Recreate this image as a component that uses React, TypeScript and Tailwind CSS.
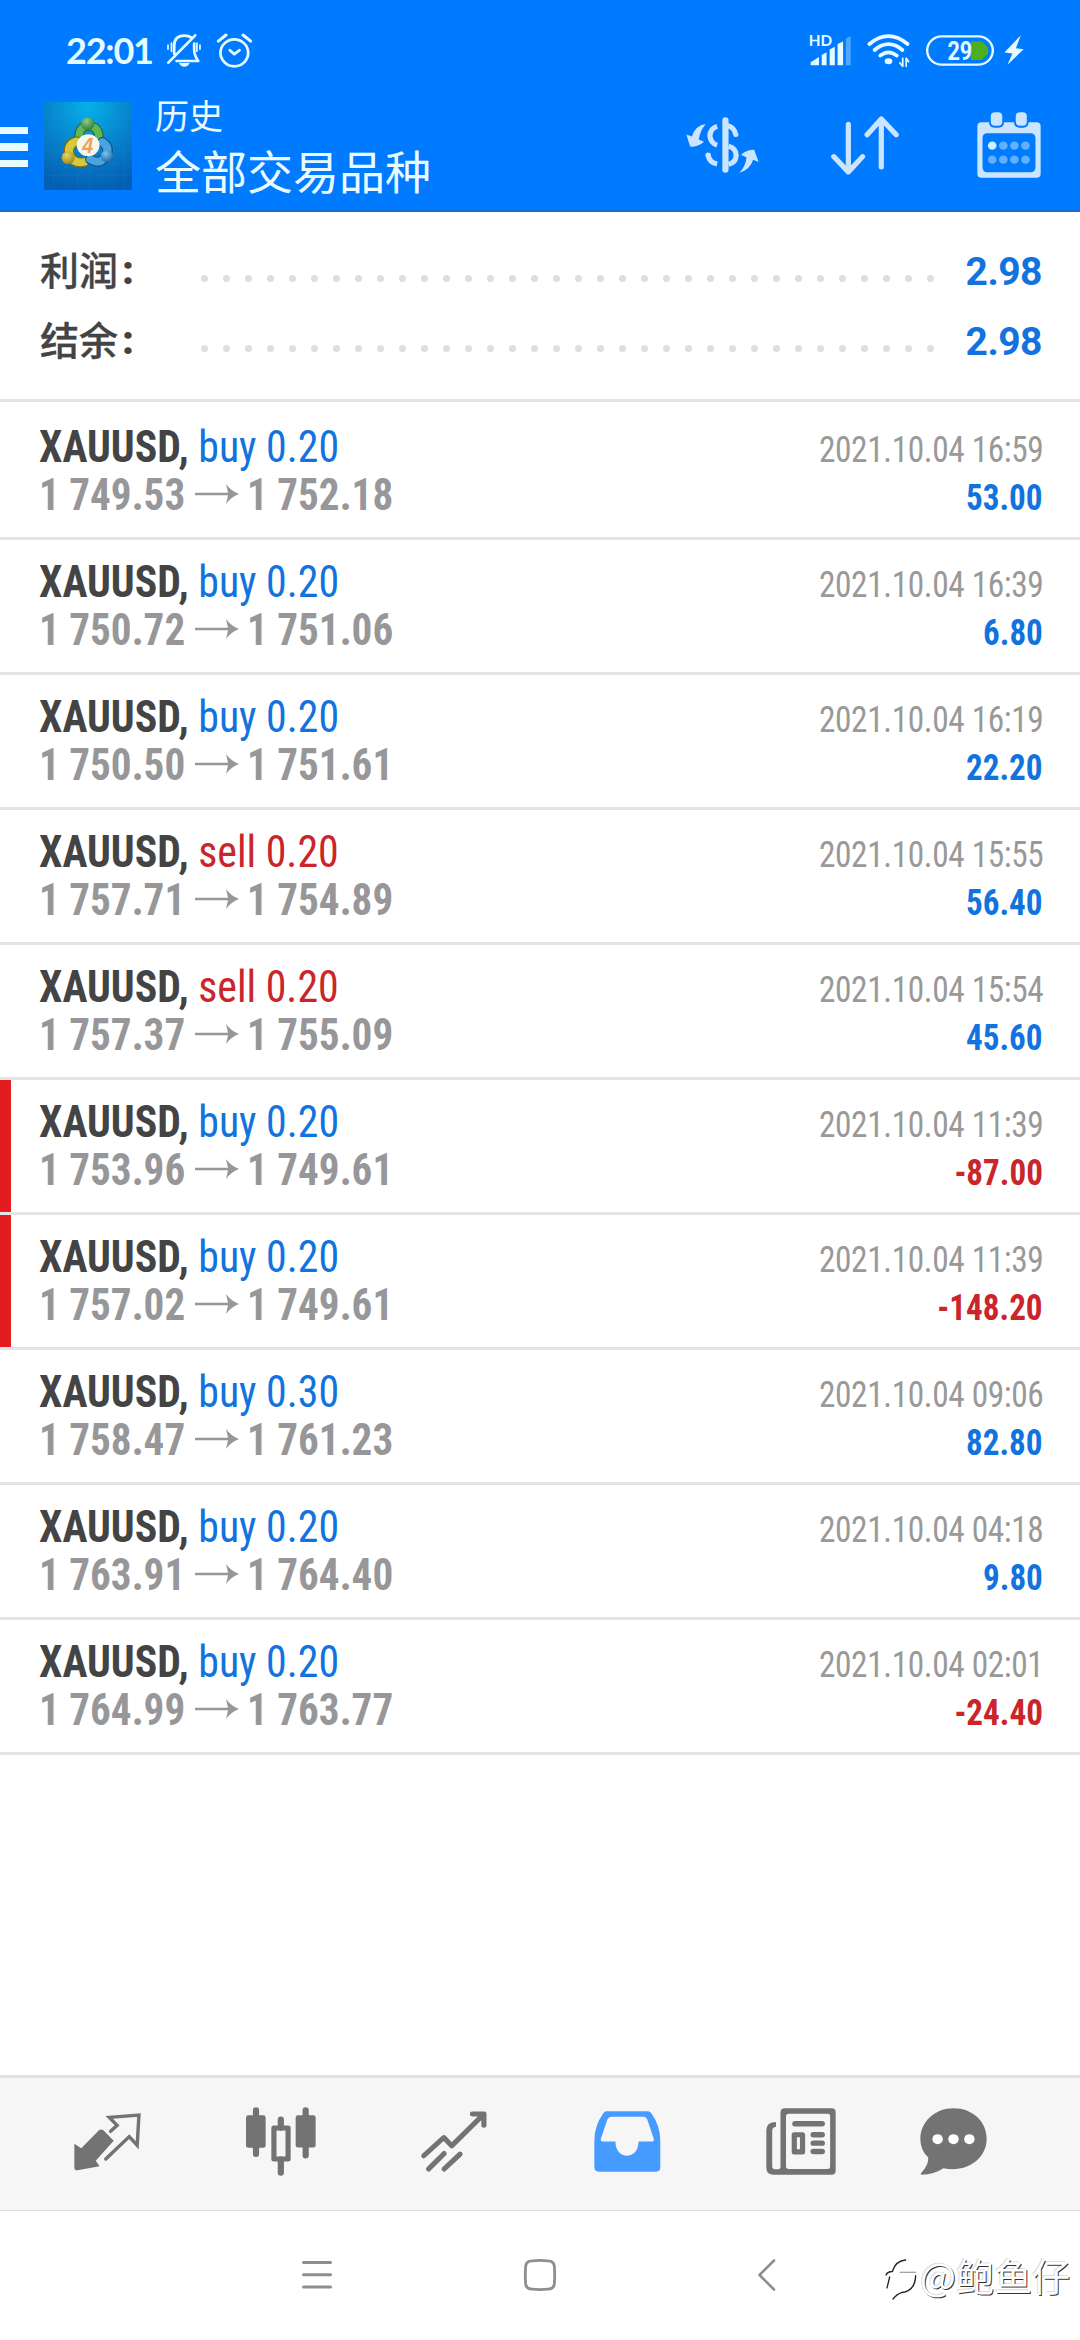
import type { ReactNode } from 'react';

type Deal = {
  side: 'buy' | 'sell';
  volume: string;
  open: string;
  close: string;
  time: string;
  profit: string;
  marked?: boolean;
};

const deals: Deal[] = [
  { side: 'buy', volume: '0.20', open: '1 749.53', close: '1 752.18', time: '2021.10.04 16:59', profit: '53.00' },
  { side: 'buy', volume: '0.20', open: '1 750.72', close: '1 751.06', time: '2021.10.04 16:39', profit: '6.80' },
  { side: 'buy', volume: '0.20', open: '1 750.50', close: '1 751.61', time: '2021.10.04 16:19', profit: '22.20' },
  { side: 'sell', volume: '0.20', open: '1 757.71', close: '1 754.89', time: '2021.10.04 15:55', profit: '56.40' },
  { side: 'sell', volume: '0.20', open: '1 757.37', close: '1 755.09', time: '2021.10.04 15:54', profit: '45.60' },
  { side: 'buy', volume: '0.20', open: '1 753.96', close: '1 749.61', time: '2021.10.04 11:39', profit: '-87.00', marked: true },
  { side: 'buy', volume: '0.20', open: '1 757.02', close: '1 749.61', time: '2021.10.04 11:39', profit: '-148.20', marked: true },
  { side: 'buy', volume: '0.30', open: '1 758.47', close: '1 761.23', time: '2021.10.04 09:06', profit: '82.80' },
  { side: 'buy', volume: '0.20', open: '1 763.91', close: '1 764.40', time: '2021.10.04 04:18', profit: '9.80' },
  { side: 'buy', volume: '0.20', open: '1 764.99', close: '1 763.77', time: '2021.10.04 02:01', profit: '-24.40' },
];

function Icon({ box, className, children }: { box: string; className: string; children: ReactNode }) {
  return (
    <svg viewBox={box} preserveAspectRatio="none" className={`block shrink-0 overflow-visible ${className}`} fill="none" strokeLinecap="round" strokeLinejoin="round">
      {children}
    </svg>
  );
}

function StatusBar() {
  return (
    <div className="flex h-[100px] items-center pl-[66px] text-[#e6fbff]">
      <span className="w-[101px] font-[Lato] text-[36px] leading-[40px] font-bold tracking-[-1.2px]">22:01</span>
      <Icon box="484 98 100 102" className="h-[34px] w-[34px]">
        <g stroke="currentColor" strokeWidth="8">
          <path d="M505 160V137Q505 106 535 106Q548 106 556 112M564 130V150Q564 165 576 182H512M488 187L567 105" />
          <path strokeWidth="5" d="M487 134V147M497 128V153M572 128V153M581 134V147" />
        </g>
        <path fill="currentColor" d="M519 188H551Q546 199 535 199Q524 199 519 188Z" />
      </Icon>
      <Icon box="632 98 101 104" className="ml-[16px] h-[35px] w-[35px]">
        <g stroke="currentColor" strokeWidth="8">
          <circle cx="682" cy="157" r="40" />
          <path d="M636 122L658 104M707 104L729 122" strokeWidth="9" />
          <path d="M669 149L682 161L697 149" />
        </g>
      </Icon>
      <Icon box="782 96 122 98" className="ml-[557px] h-[33px] w-[42px]">
        <text x="781" y="132" fontFamily="Lato" fontWeight="700" fontSize="45" fill="currentColor" textLength="68" lengthAdjust="spacingAndGlyphs">HD</text>
        <path fill="currentColor" d="M787 189V180L811 164V189ZM819 189V158L833 150V189ZM842 189V142L857 134V189ZM865 189V126L881 118V189Z" />
        <path fill="currentColor" opacity=".35" d="M889 189V110L903 102V189Z" />
      </Icon>
      <Icon box="949 98 124 105" className="ml-[16px] h-[35px] w-[43px]">
        <g stroke="currentColor" strokeWidth="11">
          <path d="M956 131Q1011 84 1066 131M971 149Q1011 114 1051 149M987 166Q1011 146 1035 166" />
        </g>
        <ellipse cx="1011" cy="183" rx="11" ry="9" fill="currentColor" />
        <path stroke="currentColor" strokeWidth="5" d="M1052 174V198M1052 198L1044 188M1062 198V174M1062 174L1069 184" />
      </Icon>
      <Icon box="1118 101 197 92" className="ml-[16px] h-[31px] w-[68px]">
        <rect x="1121.500" y="105" width="190" height="84" rx="42" stroke="currentColor" strokeWidth="7" />
        <path fill="#4caf1e" d="M1248 120H1280L1298 138V157L1280 175H1248Z" />
        <text x="1180" y="174" fontFamily="Roboto" fontWeight="700" fontSize="74" fill="currentColor" textLength="72" lengthAdjust="spacingAndGlyphs">29</text>
      </Icon>
      <Icon box="1344 102 57 88" className="ml-[10px] h-[30px] w-[20px]">
        <path fill="currentColor" d="M1392 103L1345 153L1368 156L1354 189L1400 144L1378 141Z" />
      </Icon>
    </div>
  );
}

function Logo() {
  return (
    <Icon box="128 306 255 264" className="h-[88px] w-[88px]">
      <defs>
        <radialGradient id="sky" cx=".5" cy=".05" r=".95">
          <stop offset="0" stopColor="#06b0ea" />
          <stop offset=".5" stopColor="#0784cc" />
          <stop offset="1" stopColor="#045fb4" />
        </radialGradient>
        <radialGradient id="green" cx=".4" cy=".3" r=".8">
          <stop offset="0" stopColor="#8fce83" />
          <stop offset="1" stopColor="#1f7638" />
        </radialGradient>
        <radialGradient id="gold" cx=".4" cy=".3" r=".8">
          <stop offset="0" stopColor="#e8d75a" />
          <stop offset="1" stopColor="#94801a" />
        </radialGradient>
        <radialGradient id="blue" cx=".4" cy=".3" r=".8">
          <stop offset="0" stopColor="#7cc4ee" />
          <stop offset="1" stopColor="#155f9f" />
        </radialGradient>
      </defs>
      <rect x="128" y="306" width="255" height="264" fill="url(#sky)" />
      <path stroke="#3fb4e4" strokeOpacity=".14" strokeWidth="2" d="M155 306V570M190 306V570M225 306V570M260 306V570M295 306V570M330 306V570M362 306V570M128 345H383M128 382H383M128 418H383M128 454H383M128 490H383M128 526H383" />
      <path stroke="#2c6b2e" strokeWidth="28" d="M230 412Q228 378 257 378Q286 378 287 412" />
      <path stroke="#62b656" strokeWidth="21" d="M230 412Q228 378 257 378Q286 378 287 412" />
      <path stroke="#7d6c12" strokeWidth="30" d="M222 424Q194 434 202 464Q214 492 244 486" />
      <path stroke="#d8c93c" strokeWidth="23" d="M222 424Q194 434 202 464Q214 492 244 486" />
      <path stroke="#0e4f8c" strokeWidth="30" d="M297 426Q320 442 308 468Q290 496 262 478" />
      <path stroke="#4ba3dd" strokeWidth="23" d="M297 426Q320 442 308 468Q290 496 262 478" />
      <circle cx="255" cy="371" r="19" fill="url(#green)" />
      <circle cx="198" cy="473" r="19" fill="url(#gold)" />
      <circle cx="310" cy="468" r="18" fill="url(#blue)" />
      <circle cx="256" cy="436" r="33" fill="#f6f6f1" />
      <text x="239" y="458" fontFamily="Liberation Sans" fontStyle="italic" fontWeight="700" fontSize="64" fill="#f3a055" textLength="32" lengthAdjust="spacingAndGlyphs">4</text>
    </Icon>
  );
}

function Header() {
  return (
    <header className="h-[212px] border-b-2 border-[#1a6bd2] bg-[#007aff]">
      <StatusBar />
      <div className="flex h-[90px] items-center">
        <div className="mt-1 flex w-[28px] flex-col gap-[9px]">
          <div className="h-[7.5px] bg-[#e9faff]" />
          <div className="h-[7.5px] bg-[#e9faff]" />
          <div className="h-[7.5px] bg-[#e9faff]" />
        </div>
        <div className="mt-[2px] ml-4"><Logo /></div>
        <div className="-mt-[3px] ml-[23px] w-[531px] font-['Noto_Sans_CJK_SC',sans-serif] text-[#e9fbff]">
          <div className="text-[34px] leading-[50px]">历史</div>
          <div className="text-[46px] leading-[58px]">全部交易品种</div>
        </div>
        <Icon box="423 348 211 169" className="h-[56px] w-[73px] text-[#cbe5ff]">
          <rect x="528" y="349" width="18" height="167" rx="9" fill="currentColor" />
          <g stroke="currentColor" strokeWidth="15" strokeLinecap="butt">
            <path d="M513 376Q493 382 492 405Q494 427 513 433" />
            <path d="M546 375Q562 380 567 401" strokeLinecap="round" />
            <path d="M546 436Q568 443 568 464Q567 486 546 491" />
            <path d="M487 463Q490 485 513 490" />
          </g>
          <circle cx="487" cy="463" r="8" fill="currentColor" />
          <path fill="currentColor" d="M480 369Q450 373 440 407L424 401L435 437Q457 440 475 423L460 416Q463 390 480 369Z" />
          <path fill="currentColor" d="M577 516Q608 508 617 477L633 484L620 447Q600 446 582 462L598 470Q595 498 577 516Z" />
        </Icon>
        <Icon box="846 348 196 176" className="ml-[72px] h-[59px] w-[68px]">
          <path stroke="#cbe5ff" strokeWidth="15" d="M896 373V515M854 469L896 515L937 469M991 500V357M950 404L991 357L1034 404" />
        </Icon>
        <Icon box="1268 335 185 198" className="ml-[78px] h-[66px] w-[64px]">
          <path fill="#cbe5ff" fillRule="evenodd" d="M1281 366H1440Q1452 366 1452 378V520Q1452 532 1440 532H1281Q1269 532 1269 520V378Q1269 366 1281 366ZM1298 399Q1284 399 1284 413V501Q1284 516 1298 516H1422Q1437 516 1437 501V413Q1437 399 1422 399Z" />
          <rect x="1303" y="331" width="43" height="51" rx="15" fill="#007aff" />
          <rect x="1375" y="331" width="42" height="51" rx="15" fill="#007aff" />
          <rect x="1308" y="336" width="33" height="40" rx="12" fill="#cbe5ff" />
          <rect x="1380" y="336" width="32" height="40" rx="12" fill="#cbe5ff" />
          {[1312, 1344, 1376, 1408].map((x) => (
            <g key={x} fill="#62b1ff">
              <circle cx={x} cy="436" r="12.500" fill={x === 1312 ? '#c9f0ff' : '#62b1ff'} />
              <circle cx={x} cy="478" r="12.500" />
            </g>
          ))}
        </Icon>
      </div>
    </header>
  );
}

function SummaryRow({ label, value }: { label: string; value: string }) {
  return (
    <div className="flex h-[70px] items-center justify-between">
      <div className="flex w-[160px] items-center text-[#444]">
        <span className="-mt-[5px] font-['Noto_Sans_CJK_SC',sans-serif] text-[39px] font-medium [-webkit-text-stroke:0.3px]">{label}</span>
        <span className="ml-1 font-[Roboto] text-[40px] font-black">:</span>
      </div>
      <div className="mt-[15px] flex gap-[15px]">
        {Array.from({ length: 34 }, (_, i) => (
          <i key={i} className="size-[7px] rounded-full bg-[#dedede]" />
        ))}
      </div>
      <span className="mt-[3px] w-[108px] text-right font-[Roboto] text-[39px] font-bold tracking-[-0.5px] text-[#1273de]">{value}</span>
    </div>
  );
}

function DealRow({ deal }: { deal: Deal }) {
  return (
    <div className="relative h-[135px] border-b-3 border-[#e4e4e4] pt-[18px] pr-[37px] pl-[39px] font-[Roboto] text-[44px] leading-[48px] whitespace-pre [font-stretch:75%]">
      {deal.marked && <div className="absolute inset-y-0 left-0 w-[11px] bg-[#e11d1f]" />}
      <div className="flex h-[48px] items-baseline justify-between">
        <div className="origin-left scale-x-[0.95]">
          <span className="font-bold text-[#444]">XAUUSD, </span>
          <span className={deal.side === 'buy' ? 'text-[#1273de]' : 'text-[#c9252b]'}>{deal.side} {deal.volume}</span>
        </div>
        <span className="origin-right scale-x-[0.9] text-[37px] tracking-[-0.4px] text-[#999]">{deal.time}</span>
      </div>
      <div className="flex h-[48px] items-baseline justify-between">
        <div className="flex items-baseline font-bold text-[#97979a]">
          <div className="w-[156px]">
            <span className="inline-block origin-left scale-x-[0.935]">{deal.open}</span>
          </div>
          <Icon box="0 0 44 20" className="mr-[8px] h-[20px] w-[44px] -translate-y-[6px]">
            <path fill="currentColor" d="M0 8.700H33L31 0Q36 7 44 10Q36 13 31 20L33 11.300H0Z" />
          </Icon>
          <span className="origin-left scale-x-[0.935]">{deal.close}</span>
        </div>
        <span className={`origin-right scale-x-[0.895] text-[37px] font-bold ${deal.profit.startsWith('-') ? 'text-[#c9252b]' : 'text-[#1273de]'}`}>{deal.profit}</span>
      </div>
    </div>
  );
}

function TabBar() {
  return (
    <nav className="flex h-[136px] items-center border-t-3 border-b border-t-[#e2e2e2] border-b-[#dcdcdc] bg-[#f6f6f6] pb-[5px] pl-[21px] text-[#737373]">
      <div className="flex w-[173.400px] justify-center">
        <Icon box="218 158 194 177" className="h-[59px] w-[67px]">
          <path fill="currentColor" d="M219 253L239 267L291 212Q297 208 303 213L333 244L281 304L292 321L228 333Q219 333 219 325Z" />
          <path stroke="currentColor" strokeWidth="10" strokeLinejoin="miter" d="M324 216L343 198L320 174L406 167L401 258L378 232L310 299" />
        </Icon>
      </div>
      <div className="flex w-[173.400px] justify-center">
        <Icon box="715 143 203 206" className="h-[69px] w-[70px]">
          <path stroke="currentColor" strokeWidth="18" d="M744 153V283M888 153V288M816 180V205M816 300V339" />
          <rect x="715" y="168" width="57" height="97" rx="7" fill="currentColor" />
          <rect x="859" y="168" width="58" height="96" rx="7" fill="currentColor" />
          <rect x="796" y="206" width="41" height="92" stroke="currentColor" strokeWidth="15" />
        </Icon>
      </div>
      <div className="flex w-[173.400px] justify-center">
        <Icon box="1223 151 191 184" className="h-[61px] w-[66px]">
          <path stroke="currentColor" strokeWidth="15" d="M1231 286L1289 231L1312 256L1403 162M1372 160H1405V194M1245 326L1290 279M1290 326L1336 281" />
        </Icon>
      </div>
      <div className="flex w-[173.400px] justify-center text-[#459bff]">
        <Icon box="158 151 194 184" className="h-[61px] w-[67px]">
          <path fill="currentColor" fillRule="evenodd" d="M194 152H314Q320 152 324 158Q350 196 350 240V320Q350 334 338 334H172Q159 334 159 320V240Q159 196 185 158Q188 152 194 152ZM208 168Q200 168 197 176L178 234Q176 243 184 243H220C220 300 287 300 287 243H326Q333 243 331 235L312 176Q309 168 302 168Z" />
        </Icon>
      </div>
      <div className="flex w-[173.400px] justify-center">
        <Icon box="656 143 203 200" className="h-[67px] w-[70px]">
          <path fill="currentColor" fillRule="evenodd" d="M711 144H847Q858 144 858 155V330Q858 342 846 342H678Q657 342 657 322V208Q657 186 685 185V199Q674 200 674 212V317Q674 326 682 326H691Q698 326 698 318V157Q698 144 711 144ZM722 160Q714 160 714 168V317Q714 325 722 325H835Q842 325 842 317V168Q842 160 835 160Z" />
          <path stroke="currentColor" strokeWidth="16" d="M740 190H819M793 223H819M793 248H819M793 273H819" />
          <rect x="738" y="223" width="24" height="51" stroke="currentColor" strokeWidth="15" />
        </Icon>
      </div>
      <div className="flex w-[132px] justify-center">
        <Icon box="1102 143 194 200" className="h-[67px] w-[67px]">
          <path fill="currentColor" d="M1199 144C1255 144 1295 184 1295 235C1295 297 1235 337 1170 323Q1142 342 1108 342Q1101 341 1106 336Q1126 316 1126 291Q1103 268 1103 236C1103 184 1145 144 1199 144Z" />
          <g fill="#fff">
            <circle cx="1153" cy="236" r="15" />
            <circle cx="1199" cy="236" r="15" />
            <circle cx="1245" cy="236" r="15" />
          </g>
        </Icon>
      </div>
    </nav>
  );
}

function SystemNav() {
  return (
    <div className="relative flex h-[129px] items-center pb-[2px] pl-[302px] text-[#8e8e8e]">
      <Icon box="0 0 30 28" className="h-[28px] w-[30px]">
        <path stroke="currentColor" strokeWidth="3" d="M1.500 1.500H28.500M1.500 13.700H28.500M1.500 26H28.500" />
      </Icon>
      <Icon box="0 0 32 32" className="ml-[192px] h-[32px] w-[32px]">
        <path stroke="currentColor" strokeWidth="2.800" d="M8 1.800Q16 1 24 1.800Q30.300 2 30.400 8Q31 16 30.400 24Q30.300 30 24 30.200Q16 31 8 30.200Q1.700 30 1.600 24Q1 16 1.600 8Q1.700 2 8 1.800Z" />
      </Icon>
      <Icon box="0 0 18 32" className="ml-[202px] h-[32px] w-[18px]">
        <path stroke="currentColor" strokeWidth="2.600" d="M16 1.500L1.500 16L16 30.500" />
      </Icon>
      {/* author stamp */}
      <div className="absolute top-[36px] left-[885px] flex items-center">
        <Icon box="1000 608 96 124" className="mt-2 h-[42px] w-[32px]">
          <path stroke="#222" strokeWidth="4" d="M1003 658Q1008 648 1022 648Q1032 616 1062 614M1014 664L1006 696M1092 660Q1090 706 1050 710Q1036 714 1024 729" />
          <path stroke="#888" strokeWidth="3" d="M1045 650H1092" />
        </Icon>
        <span className="ml-[3px] font-['Noto_Sans_CJK_SC',sans-serif] text-[38px] leading-[56px] text-white [text-shadow:1px_1px_0_#333,-1px_-1px_0_#ddd]">@鲍鱼仔</span>
      </div>
    </div>
  );
}

export default function App() {
  return (
    <div className="flex h-[2340px] w-[1080px] flex-col overflow-hidden bg-white">
      <Header />
      <section className="h-[190px] border-b-3 border-[#e4e4e4] pt-[24px] pr-[38px] pl-[40px]">
        <SummaryRow label="利润" value="2.98" />
        <SummaryRow label="结余" value="2.98" />
      </section>
      <main className="flex-1 pt-[3px]">
        {deals.map((deal) => (
          <DealRow key={deal.open + deal.time} deal={deal} />
        ))}
      </main>
      <TabBar />
      <SystemNav />
    </div>
  );
}
